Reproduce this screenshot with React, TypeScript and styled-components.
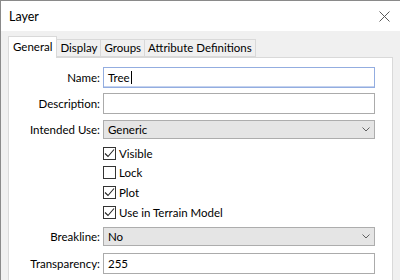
import styled, { createGlobalStyle } from "styled-components";

const GlobalStyle = createGlobalStyle`
  html, body {
    margin: 0;
    padding: 0;
    background: #f0f0f0;
  }
  body {
    font-family: "Lato", "Noto Sans", sans-serif;
    font-size: 11.5px;
    color: #000;
  }
`;

const Window = styled.div`
  width: 400px;
  height: 280px;
  box-sizing: border-box;
  border-top: 1px solid #8a8a8a;
  border-left: 1px solid #8a8a8a;
  background: #f0f0f0;
  display: flex;
  flex-direction: column;
  overflow: hidden;
`;

const TitleBar = styled.div`
  height: 30px;
  background: #fff;
  display: flex;
  align-items: center;
  justify-content: space-between;
  padding: 0 10px 0 8px;
`;

const Title = styled.span`
  font-size: 12.5px;
`;

const Body = styled.div`
  flex: 1;
  display: flex;
  flex-direction: column;
  padding: 5px 7px 0 7px;
`;

const TabStrip = styled.div`
  display: flex;
  align-items: flex-end;
  height: 21px;
  position: relative;
  z-index: 1;
`;

const Tab = styled.div<{ $active?: boolean }>`
  box-sizing: border-box;
  height: ${({ $active }) => ($active ? "22px" : "18px")};
  padding: ${({ $active }) => ($active ? "3px 4px 0" : "1px 3px 0")};
  margin-left: ${({ $active }) => ($active ? "0" : "-1px")};
  margin-bottom: ${({ $active }) => ($active ? "-1px" : "0")};
  background: ${({ $active }) => ($active ? "#fff" : "#f0f0f0")};
  border: 1px solid #d9d9d9;
  border-bottom: ${({ $active }) => ($active ? "none" : "1px solid #d9d9d9")};
  white-space: nowrap;
  position: relative;
  z-index: ${({ $active }) => ($active ? 2 : 1)};
`;

const Panel = styled.div`
  flex: 1;
  background: #fff;
  border: 1px solid #d9d9d9;
  border-bottom: none;
  padding-top: 9px;
  display: flex;
  flex-direction: column;
`;

const Row = styled.div<{ $mt?: number }>`
  display: grid;
  grid-template-columns: 91px 272px;
  column-gap: 3px;
  align-items: center;
  margin-top: ${({ $mt }) => $mt ?? 0}px;
`;

const Label = styled.label`
  text-align: right;
  white-space: nowrap;
`;

const TextField = styled.div<{ $focused?: boolean }>`
  box-sizing: border-box;
  height: 21px;
  border: 1px solid ${({ $focused }) => ($focused ? "#93ade0" : "#ababab")};
  box-shadow: ${({ $focused }) => ($focused ? "inset 0 -1px 0 #c5d3ef" : "none")};
  background: #fff;
  padding: 0 4px;
  display: flex;
  align-items: center;
`;

const Caret = styled.span`
  display: inline-block;
  width: 1px;
  height: 13px;
  background: #000;
  margin-left: 1px;
`;

const Select = styled.div`
  box-sizing: border-box;
  height: 19px;
  border: 1px solid #adadad;
  background: #e5e5e5;
  padding: 0 4px;
  display: flex;
  align-items: center;
  justify-content: space-between;
`;

const CheckRow = styled.div<{ $mt?: number }>`
  display: flex;
  align-items: center;
  gap: 3px;
  height: 13px;
  margin-left: 94px;
  margin-top: ${({ $mt }) => $mt ?? 0}px;
`;

const Box = styled.div`
  box-sizing: border-box;
  width: 13px;
  height: 13px;
  border: 1px solid #333;
  background: #fff;
  display: flex;
  align-items: center;
  justify-content: center;
`;

const CloseIcon = () => (
  <svg width="11" height="11" viewBox="0 0 11 11">
    <path d="M0.5 0.5 L10.5 10.5 M10.5 0.5 L0.5 10.5" stroke="#5a5a5a" strokeWidth="1" fill="none" />
  </svg>
);

const Chevron = () => (
  <svg width="8" height="5" viewBox="0 0 8 5">
    <path d="M0.5 0.5 L4 4 L7.5 0.5" stroke="#606060" strokeWidth="1" fill="none" />
  </svg>
);

const Check = () => (
  <svg width="11" height="11" viewBox="0 0 11 11">
    <path d="M1 5.5 L4 8.5 L10 1.5" stroke="#222" strokeWidth="1.1" fill="none" />
  </svg>
);

const CheckItem = ({ label, checked, mt }: { label: string; checked?: boolean; mt?: number }) => (
  <CheckRow $mt={mt}>
    <Box>{checked && <Check />}</Box>
    <span>{label}</span>
  </CheckRow>
);

const App = () => {
  return (
    <>
      <GlobalStyle />
      <Window>
        <TitleBar>
          <Title>Layer</Title>
          <CloseIcon />
        </TitleBar>
        <Body>
          <TabStrip>
            <Tab $active>General</Tab>
            <Tab>Display</Tab>
            <Tab>Groups</Tab>
            <Tab>Attribute Definitions</Tab>
          </TabStrip>
          <Panel>
            <Row>
              <Label>Name:</Label>
              <TextField $focused>
                Tree
                <Caret />
              </TextField>
            </Row>
            <Row $mt={5}>
              <Label>Description:</Label>
              <TextField />
            </Row>
            <Row $mt={6}>
              <Label>Intended Use:</Label>
              <Select>
                <span>Generic</span>
                <Chevron />
              </Select>
            </Row>
            <CheckItem label="Visible" checked mt={8} />
            <CheckItem label="Lock" mt={6} />
            <CheckItem label="Plot" checked mt={7} />
            <CheckItem label="Use in Terrain Model" checked mt={7} />
            <Row $mt={8}>
              <Label>Breakline:</Label>
              <Select>
                <span>No</span>
                <Chevron />
              </Select>
            </Row>
            <Row $mt={7}>
              <Label>Transparency:</Label>
              <TextField>255</TextField>
            </Row>
          </Panel>
        </Body>
      </Window>
    </>
  );
};

export default App;
